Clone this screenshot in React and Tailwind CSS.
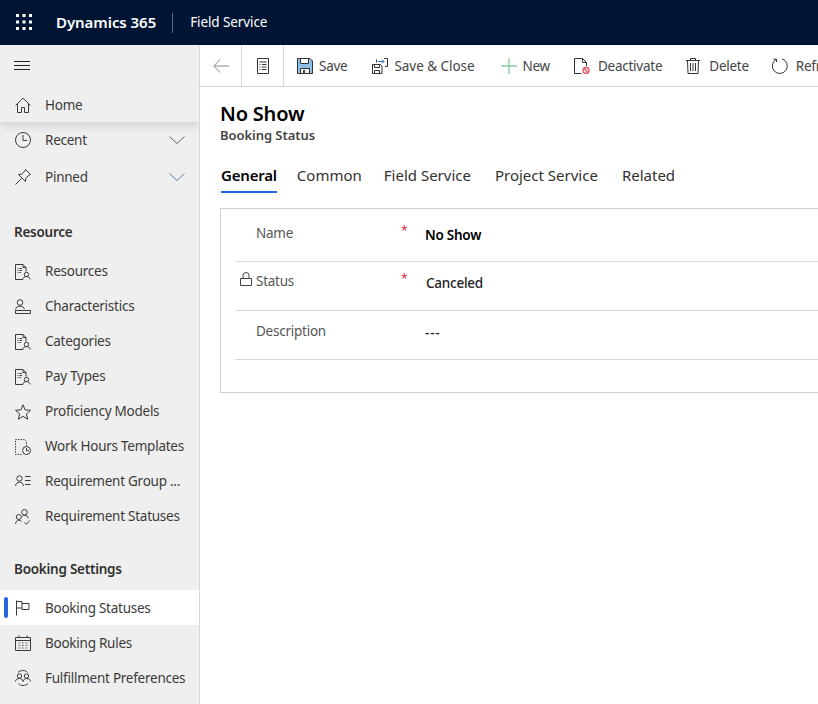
import React from "react";

function Ico({ children, w = 16, h = 16 }) {
  return (
    <svg width={w} height={h} viewBox="0 0 16 16" fill="none" stroke="#3a3a3a" strokeWidth="1" className="shrink-0">
      {children}
    </svg>
  );
}

const DocPerson = () => (
  <Ico>
    <path d="M8 15.500H.5V.5h7.500l3 3V7.500M8 .5v3h3" />
    <path d="M2.500 4.500h1M4.500 4.500h2.500M2.500 6.500h1M4.500 6.500h2.500M2.500 8.500h1M4.500 8.500h1.500" />
    <circle cx="11.500" cy="10.500" r="2.200" />
    <path d="M7.800 15.500c.3-2 1.800-3 3.700-3s3.400 1 3.700 3" />
  </Ico>
);

const icons = {
  home: (
    <Ico>
      <path d="M.5 8.500 8 1.200 15.500 8.500M2.500 6.500v9h4v-5h3v5h4v-9" />
    </Ico>
  ),
  recent: (
    <Ico>
      <circle cx="8" cy="8" r="7.500" />
      <path d="M8 3V8.500H12" />
    </Ico>
  ),
  pinned: (
    <Ico>
      <path d="M10.500.5 15.500 5.500 13.800 6.200 10.800 9.500 10.500 12.500 3.500 5.500 6.500 5.200 9.800 2.200ZM6.500 9.500.5 15.500" />
    </Ico>
  ),
  doc: <DocPerson />,
  characteristics: (
    <Ico>
      <circle cx="5" cy="3.500" r="2.800" />
      <path d="M.5 10.500c.3-2 2-3.300 4.500-3.300s4 1.300 4.500 3M.5 11.500h15v3H.5z" />
    </Ico>
  ),
  star: (
    <Ico>
      <path d="M8 .8 10.100 5.900 15.500 6.300 11.400 9.900 12.700 15.200 8 12.400 3.300 15.200 4.600 9.900.5 6.300 5.900 5.900Z" />
    </Ico>
  ),
  hours: (
    <Ico>
      <path d="M6.500 15.500H.5V.5h9l2 2V7" strokeDasharray="1.400 1.200" />
      <circle cx="11.500" cy="11.500" r="4" />
      <path d="M11.500 9v2.700h2.500" />
    </Ico>
  ),
  group: (
    <Ico>
      <circle cx="4.500" cy="4.500" r="2.700" />
      <path d="M.5 12c.3-2.500 2-3.800 4-3.800s3.700 1.300 4 3.800M10 2.500h5.500M10 6.500h5.500M10 10.500h5.500" />
    </Ico>
  ),
  reqStatus: (
    <Ico>
      <circle cx="9.500" cy="3.300" r="2.800" />
      <circle cx="3.800" cy="8" r="2.500" />
      <path d="M.5 15c.2-2.400 1.500-3.800 3.300-3.800 1.200 0 2.200.5 2.800 1.400M7.500 7.500c.5-.8 1.200-1.200 2-1.200 2 0 3.400 1.100 4 3M9.500 13.500l1.800 1.800 3.500-3.800" />
    </Ico>
  ),
  flag: (
    <Ico>
      <path d="M1.500 15.500V.5M1.500 1.500h5.500v6.500H1.500M7 3.500h7v6H7V8" />
    </Ico>
  ),
  calendar: (
    <Ico>
      <path d="M.5 2.500h15v13H.5zM.5 5.500h15M4 .5v2M12 .5v2" />
      <path d="M3.500 8h2M7 8h2M10.500 8h2M3.500 10.500h2M7 10.500h2M10.500 10.500h2M3.500 13h2M7 13h2M10.500 13h2" strokeDasharray="1 .6" />
    </Ico>
  ),
  fulfill: (
    <Ico>
      <circle cx="4.500" cy="6" r="2.200" />
      <circle cx="11.500" cy="6" r="2.200" />
      <path d="M.5 11.500c.2-2 1.700-3 4-3 1.700 0 3 1 3.500 3 .5-2 1.800-3 3.500-3 2.300 0 3.800 1 4 3M3 2.500C4.200 1.200 6 .5 8 .5s3.500.6 4.500 2M13 13.500c-1.200 1.300-3 2-5 2s-3.500-.7-4.500-2" />
    </Ico>
  ),
};

const Chevron = ({ color }) => (
  <svg width="16" height="8" viewBox="0 0 16 8" fill="none" stroke={color} strokeWidth="1" className="shrink-0">
    <path d="M.5.500 8 7.500 15.500.5" />
  </svg>
);

function NavItem({ icon, label, active, nudge }) {
  return (
    <div className={`relative flex h-[35px] items-center pl-[15px] text-[13.500px] text-[#3b3a39] ${active ? "bg-white" : ""}`}>
      {active && <span className="absolute left-1 top-[7px] h-[21px] w-1 rounded-sm bg-[#2266e3]" />}
      {icon}
      <span className={`ml-[14px] whitespace-nowrap ${nudge ? "pt-[2px]" : ""}`}>{label}</span>
    </div>
  );
}

function Sidebar() {
  return (
    <aside className="flex w-[200px] shrink-0 flex-col overflow-hidden border-r border-[#d8d8d8] bg-[#efefef]">
      <div className="flex h-[42px] shrink-0 items-center pl-[14px]">
        <svg width="16" height="10" viewBox="0 0 16 10" stroke="#222" strokeWidth="1">
          <path d="M0 .5h16M0 4.500h16M0 8.500h16" />
        </svg>
      </div>
      <div className="shadow-[0_4px_8px_rgba(0,0,0,0.12)]">
        <NavItem icon={icons.home} label="Home" nudge />
      </div>
      <div className="flex h-[36px] shrink-0 items-center pl-[15px] pr-[14px] text-[13.500px] text-[#3b3a39]">
        {icons.recent}
        <span className="ml-[14px] flex-1">Recent</span>
        <Chevron color="#666" />
      </div>
      <div className="flex h-[38px] shrink-0 items-center pl-[15px] pr-[14px] text-[13.500px] text-[#3b3a39]">
        {icons.pinned}
        <span className="ml-[14px] flex-1">Pinned</span>
        <Chevron color="#5b7fa8" />
      </div>
      <div className="mt-[18px] flex h-[37px] shrink-0 items-center pl-[14px] text-[13.500px] font-semibold text-[#323130]">Resource</div>
      <div className="mt-[3px]">
        <NavItem icon={icons.doc} label="Resources" />
        <NavItem icon={icons.characteristics} label="Characteristics" />
        <NavItem icon={icons.doc} label="Categories" />
        <NavItem icon={icons.doc} label="Pay Types" />
        <NavItem icon={icons.star} label="Proficiency Models" />
        <NavItem icon={icons.hours} label="Work Hours Templates" />
        <NavItem icon={icons.group} label="Requirement Group ..." />
        <NavItem icon={icons.reqStatus} label="Requirement Statuses" />
      </div>
      <div className="mt-[17px] flex h-[37px] shrink-0 items-center pl-[14px] text-[13.500px] font-semibold text-[#323130]">Booking Settings</div>
      <div className="mt-[2px]">
        <NavItem icon={icons.flag} label="Booking Statuses" active nudge />
        <NavItem icon={icons.calendar} label="Booking Rules" nudge />
        <NavItem icon={icons.fulfill} label="Fulfillment Preferences" nudge />
      </div>
    </aside>
  );
}

function ToolBtn({ icon, label, className = "", labelClass = "ml-[7px]" }) {
  return (
    <div className={`flex shrink-0 items-center whitespace-nowrap text-[13.500px] text-[#444] ${className}`}>
      {icon}
      <span className={`pt-[2px] ${labelClass}`}>{label}</span>
    </div>
  );
}

function Toolbar() {
  return (
    <div className="flex h-[42px] shrink-0 items-center overflow-hidden border-b border-[#d8d8d8] bg-white">
      <div className="flex h-full w-[42px] shrink-0 items-center justify-center border-r border-[#d8d8d8]">
        <svg width="16" height="14" viewBox="0 0 16 14" fill="none" stroke="#8a8a8a" strokeWidth="1">
          <path d="M7 .5.800 7 7 13.500M1 7h15" />
        </svg>
      </div>
      <div className="flex h-full w-[42px] shrink-0 items-center justify-center border-r border-[#d8d8d8]">
        <svg width="12" height="16" viewBox="0 0 12 16" fill="none" stroke="#333" strokeWidth="1">
          <path d="M.5.500h11v15H.5zM2.500 4h7M2.500 6.500h1M5 6.500h4.500M2.500 9h1M5 9h4.500M2.500 11.500h1M5 11.500h4.500" />
        </svg>
      </div>
      <ToolBtn
        className="ml-[13px]"
        labelClass="ml-[6px]"
        label="Save"
        icon={
          <svg width="16" height="16" viewBox="0 0 16 16" className="shrink-0">
            <path d="M.5.500H13L15.500 3v12.500H.5z" fill="#8fc0e8" stroke="#333" />
            <path d="M3.500.5v5h8v-5z" fill="#fff" stroke="#333" />
            <path d="M3.500 15.500v-5h9v5z" fill="#eee" stroke="#333" />
            <path d="M6 12h2v3.500H6z" fill="#444" />
          </svg>
        }
      />
      <ToolBtn
        className="ml-[25px]"
        labelClass="ml-[6px] tracking-[-0.05px]"
        label="Save & Close"
        icon={
          <svg width="16" height="16" viewBox="0 0 16 16" fill="none" stroke="#333" className="shrink-0">
            <path d="M.5 6.500h8l1.500 1.500v7.500H.5z" />
            <path d="M2.500 6.500v3h5v-3M2.500 15.500v-3h5v3" />
            <path d="M4.500 4.500V1.500M12 .5h3.500v8H13" />
            <path d="M6 3.500h6M10 1.500l2 2-2 2" stroke="#2b78c5" />
          </svg>
        }
      />
      <ToolBtn
        className="ml-[26px]"
        labelClass="ml-[6px]"
        label="New"
        icon={
          <svg width="16" height="16" viewBox="0 0 16 16" stroke="#8fcca5" strokeWidth="1.400" className="shrink-0">
            <path d="M8 0v16M0 8h16" />
          </svg>
        }
      />
      <ToolBtn
        className="ml-[24px]"
        labelClass="ml-[8px]"
        label="Deactivate"
        icon={
          <svg width="16" height="16" viewBox="0 0 16 16" fill="none" stroke="#333" className="shrink-0">
            <path d="M7.500 15.500H.5V.5h8l4 4V8M8.500.5v4h4" />
            <circle cx="12" cy="12.500" r="3" stroke="#e8505b" strokeWidth="1.300" />
            <path d="M10 10.500l4 4" stroke="#e8505b" strokeWidth="1.300" />
          </svg>
        }
      />
      <ToolBtn
        className="ml-[24px]"
        labelClass="ml-[9px]"
        label="Delete"
        icon={
          <svg width="14" height="16" viewBox="0 0 14 16" fill="none" stroke="#333" className="shrink-0">
            <path d="M0 2.500h14M4.500 2.500V.5h5v2M1.500 2.500l.5 13h10l.5-13M4.500 5v8M7 5v8M9.500 5v8" />
          </svg>
        }
      />
      <ToolBtn
        className="ml-[23px]"
        labelClass="ml-[8px]"
        label="Refresh"
        icon={
          <svg width="16" height="16" viewBox="0 0 16 16" fill="none" stroke="#333" className="shrink-0">
            <path d="M4 1.500A7.500 7.500 0 1 0 10 .8M4.500 4V1.200H1.500" />
          </svg>
        }
      />
    </div>
  );
}

function FieldRow({ label, value, required, locked, bold, first, rowClass = "", valueClass = "" }) {
  return (
    <div className={`flex items-start border-b border-[#d8d8d8] ${first ? "h-[53px] pt-[14px]" : "h-[49px] pt-[9px]"} ${rowClass}`}>
      <div className="-mt-[1px] flex w-[21px] shrink-0 justify-start pl-[5px] pt-[2px]">
        {locked && (
          <svg width="12" height="14" viewBox="0 0 12 14" fill="none" stroke="#4a3f4a">
            <path d="M.5 6.500h11v7H.5zM3 6.500V3.500a3 3 0 0 1 6 0v3" />
          </svg>
        )}
      </div>
      <div className="w-[145px] shrink-0 text-[13.500px] text-[#555]">{label}</div>
      <div className="-mt-[1px] w-[24px] shrink-0 text-[12px] text-[#d13438]">{required ? "*" : ""}</div>
      <div className={`pt-[2px] text-[13.500px] ${bold ? "font-semibold text-black" : "font-medium text-[#222]"} ${valueClass}`}>{value}</div>
    </div>
  );
}

export default function App() {
  return (
    <div
      className="flex h-[704px] w-[818px] flex-col overflow-hidden bg-white tracking-[-0.25px]"
      style={{ fontFamily: '"Noto Sans", "Open Sans", Arial, sans-serif' }}
    >
      <header className="flex h-[45px] shrink-0 items-center bg-[#001433] text-white">
        <svg width="16" height="16" viewBox="0 0 16 16" fill="#fff" className="mb-[2px] ml-[16px] shrink-0">
          <rect x="0" y="0" width="3" height="3" />
          <rect x="6.500" y="0" width="3" height="3" />
          <rect x="13" y="0" width="3" height="3" />
          <rect x="0" y="6.500" width="3" height="3" />
          <rect x="6.500" y="6.500" width="3" height="3" />
          <rect x="13" y="6.500" width="3" height="3" />
          <rect x="0" y="13" width="3" height="3" />
          <rect x="6.500" y="13" width="3" height="3" />
          <rect x="13" y="13" width="3" height="3" />
        </svg>
        <span className="ml-[24px] text-[15px] font-semibold tracking-[-0.05px]">Dynamics 365</span>
        <span className="ml-[16px] h-[20px] w-px bg-[#5b6b80]" />
        <span className="ml-[17px] text-[13.500px] tracking-[-0.1px]">Field Service</span>
      </header>
      <div className="flex min-h-0 flex-1">
        <Sidebar />
        <main className="flex min-w-0 flex-1 flex-col">
          <Toolbar />
          <div className="pl-[20px]">
            <div className="mt-[14px] text-[20px] font-semibold leading-[26px] tracking-[-0.2px] text-black">No Show</div>
            <div className="-mt-[1px] text-[13px] font-semibold leading-[18px] tracking-[-0.05px] text-[#444]">Booking Status</div>
            <div className="mt-[20px] flex text-[15px] tracking-[0px] text-[#323130]">
              <div className="ml-px border-b-2 border-[#2266e3] pb-[4px] font-semibold tracking-[-0.2px] text-black">General</div>
              <div className="ml-[20px]">Common</div>
              <div className="ml-[22px]">Field Service</div>
              <div className="ml-[24px]">Project Service</div>
              <div className="ml-[24px]">Related</div>
            </div>
            <section className="mt-[15px] h-[185px] border border-r-0 border-[#cfcfcf] pl-[14px]">
              <FieldRow first label="Name" value="No Show" required bold />
              <FieldRow label="Status" value="Canceled" required locked valueClass="pl-px" />
              <FieldRow label="Description" value="---" rowClass="!pt-[10px]" valueClass="tracking-[0.8px]" />
            </section>
          </div>
        </main>
      </div>
    </div>
  );
}
